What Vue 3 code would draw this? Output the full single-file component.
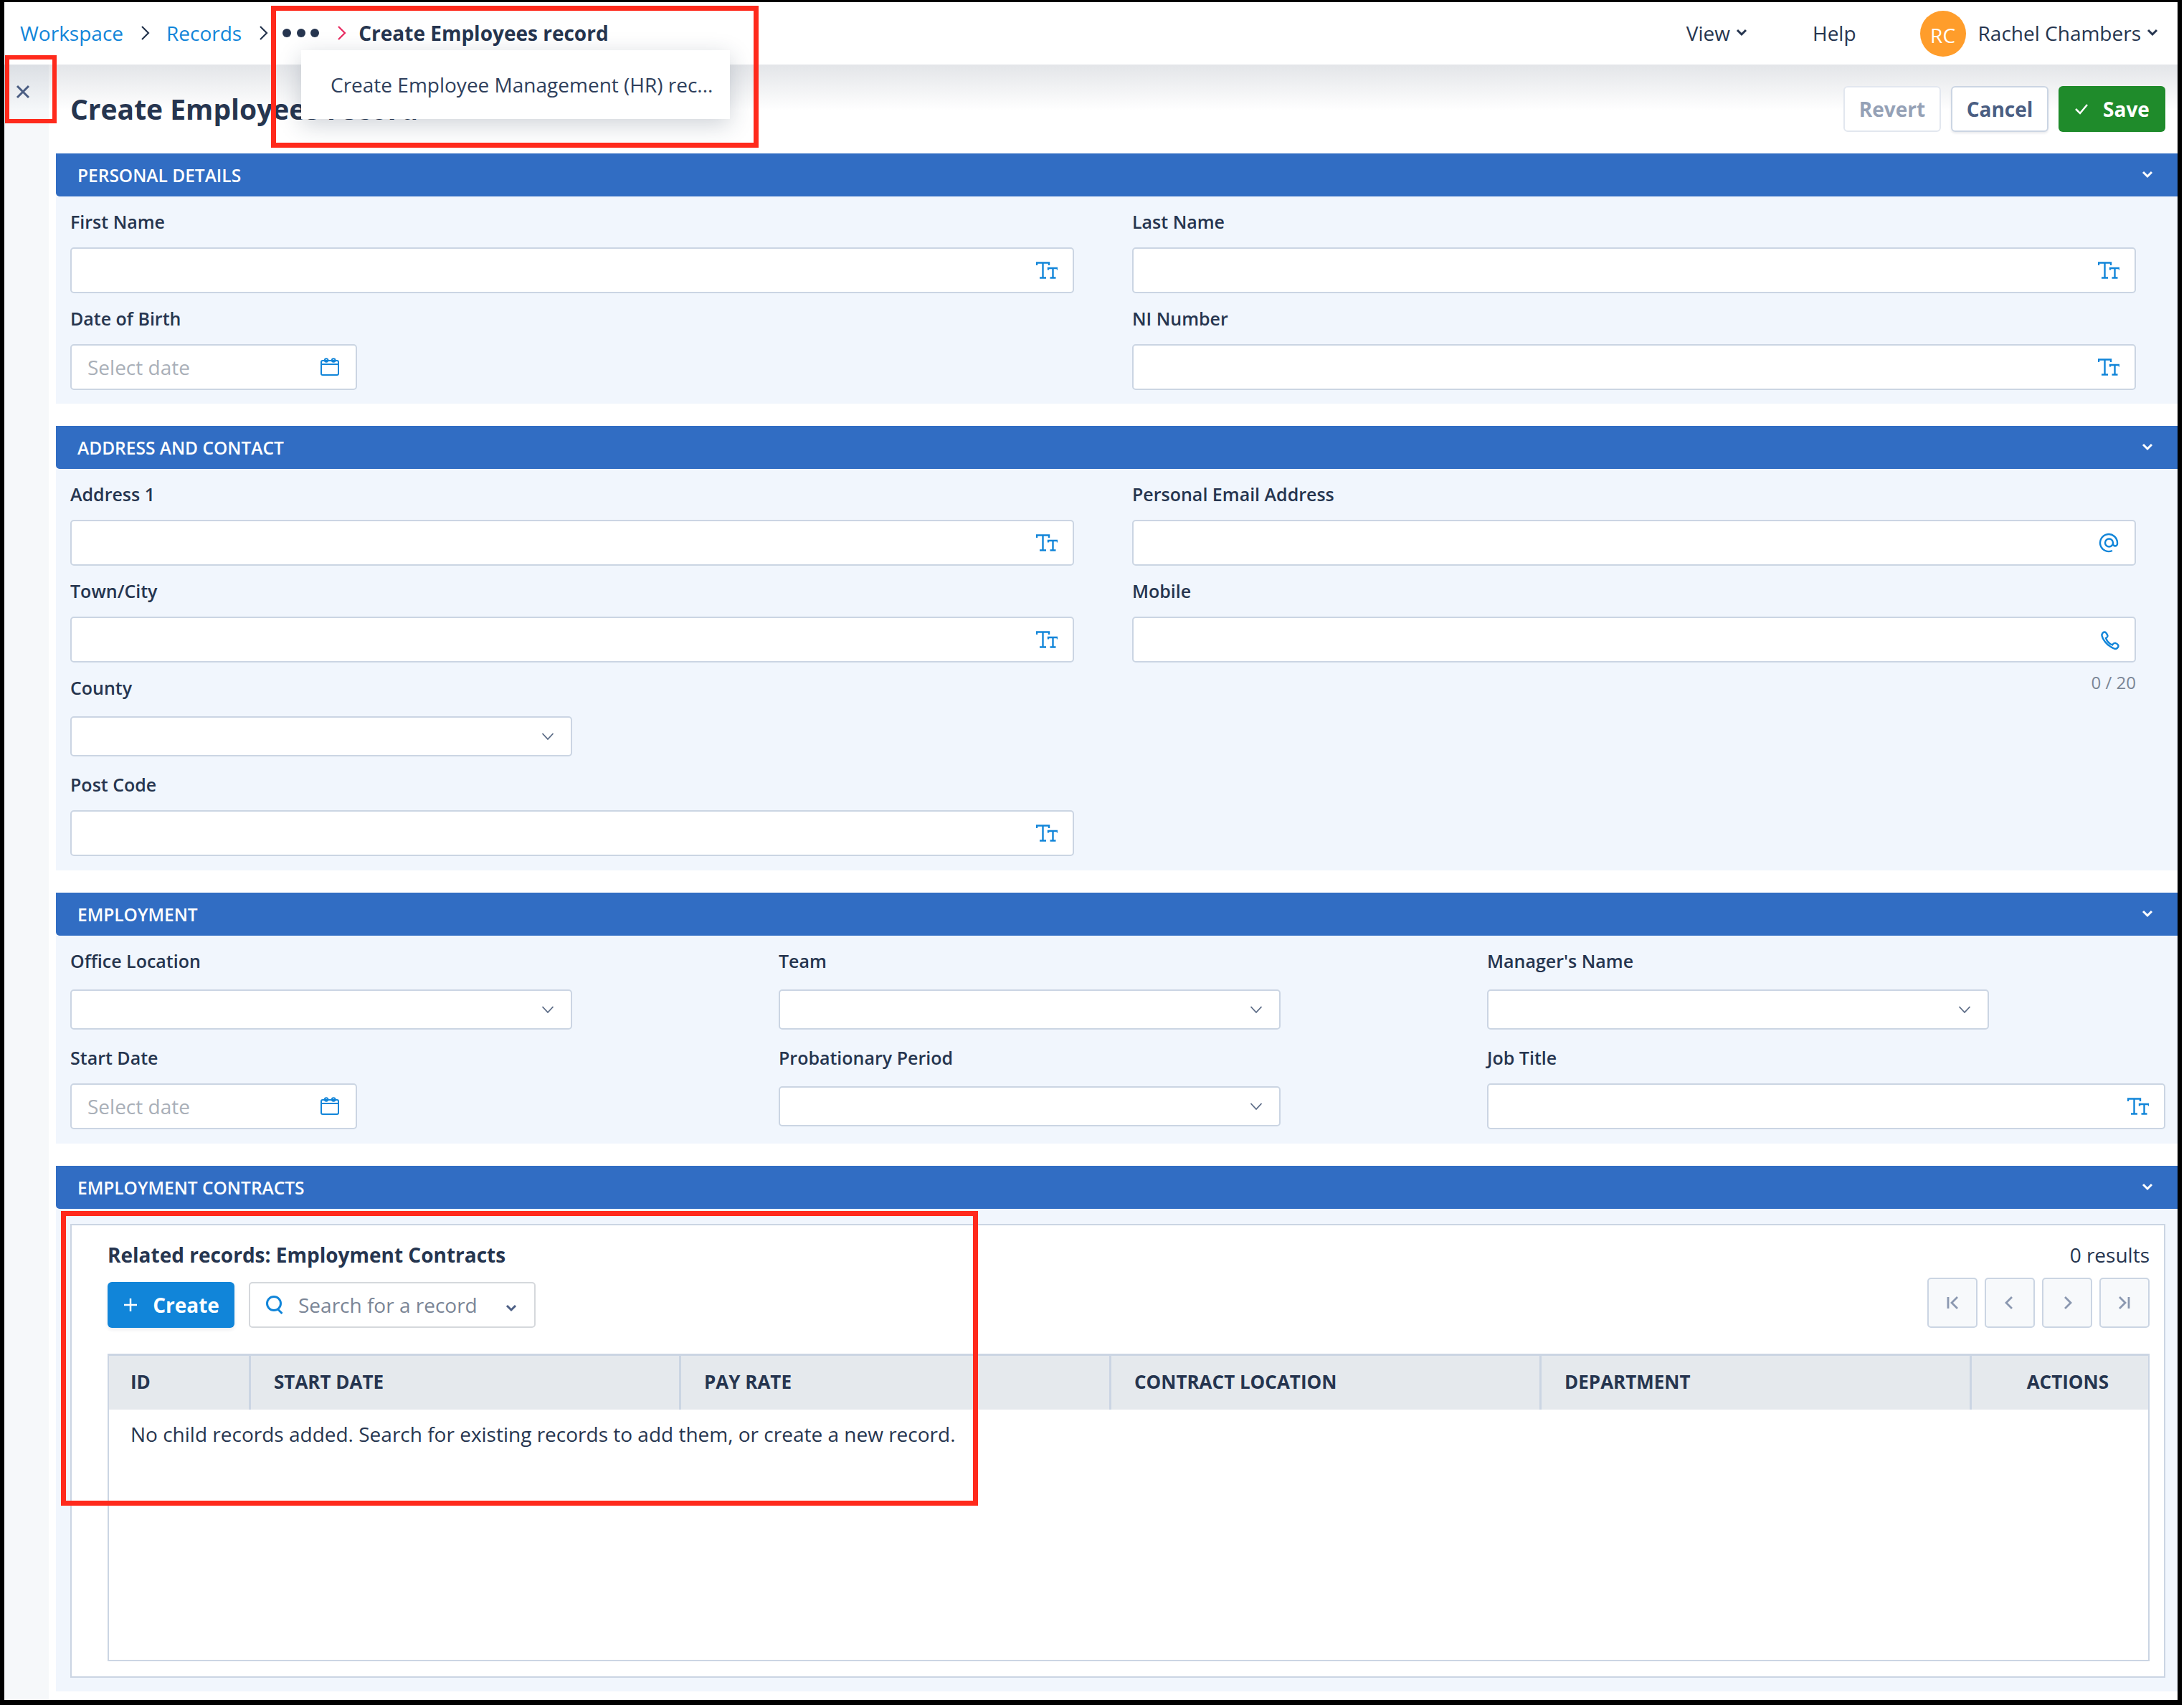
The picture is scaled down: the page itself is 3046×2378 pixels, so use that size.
<script setup>
const icons = {
  tt: 'M1 8V4.5h17V8M9.5 4.5V25M5 25.5h9M17 14.5V12h13v2.5M23.5 12v13.5M19.5 25.5h8',
  at: 'M21 15a5.5 5.5 0 1 1-11 0 5.5 5.5 0 0 1 11 0zM21 15v1.5a3 3 0 0 0 6 0V15A12 12 0 1 0 20 26',
  phone: 'M5.5 9.5C5 7.5 7 4.5 9 4.5c1.5 0 3.5 2.5 4.5 5 .4 1.2-1.500 3-2.5 3.5C12.5 17 16 21 20 22.5c1-1.5 3-3 4.5-2.5 2 .8 4 2.5 4 4 0 2-2.5 4-4.5 4-2-.3-4.5-1.8-7-3.5C12 21.5 6.5 15 5.5 9.5z',
  calendar: 'M5 6h20a2 2 0 0 1 2 2v16a2 2 0 0 1-2 2H5a2 2 0 0 1-2-2V8a2 2 0 0 1 2-2zM3 11h24M12.5 5.5a2.3 2.3 0 1 1-4.6 0 2.3 2.3 0 0 1 4.6 0zM22.5 5.5a2.3 2.3 0 1 1-4.6 0 2.3 2.3 0 0 1 4.6 0z'
};

const sections = [
  {
    title: 'Personal Details',
    cols: 'two',
    fields: [
      { label: 'First Name', type: 'text', icon: 'tt' },
      { label: 'Last Name', type: 'text', icon: 'tt' },
      { label: 'Date of Birth', type: 'date' },
      { label: 'NI Number', type: 'text', icon: 'tt' }
    ]
  },
  {
    title: 'Address and Contact',
    cols: 'two',
    fields: [
      { label: 'Address 1', type: 'text', icon: 'tt' },
      { label: 'Personal Email Address', type: 'text', icon: 'at' },
      { label: 'Town/City', type: 'text', icon: 'tt' },
      { label: 'Mobile', type: 'text', icon: 'phone', hint: '0 / 20' },
      { label: 'County', type: 'select', full: true },
      { label: 'Post Code', type: 'text', icon: 'tt', full: true }
    ]
  },
  {
    title: 'Employment',
    cols: 'three',
    fields: [
      { label: 'Office Location', type: 'select' },
      { label: 'Team', type: 'select' },
      { label: "Manager's Name", type: 'select' },
      { label: 'Start Date', type: 'date' },
      { label: 'Probationary Period', type: 'select' },
      { label: 'Job Title', type: 'text', icon: 'tt' }
    ]
  }
];

const columns = ['ID', 'Start Date', 'Pay Rate', 'Contract Location', 'Department', 'Actions'];
const pager = ['M6 4v16M19 4l-8 8 8 8', 'M15 4l-8 8 8 8', 'M9 4l8 8-8 8', 'M5 4l8 8-8 8M18 4v16'];
</script>

<template>
  <div class="shot">
    <div class="frame">
      <header class="topbar">
        <nav class="crumbs">
          <a class="crumb-link">Workspace</a>
          <svg class="crumb-sep" viewBox="0 0 14 24"><path d="M2 3l9 9-9 9" /></svg>
          <a class="crumb-link">Records</a>
          <svg class="crumb-sep crumb-sep--last" viewBox="0 0 14 24"><path d="M2 3l9 9-9 9" /></svg>
          <span class="dots"><i></i><i></i><i></i></span>
          <svg class="crumb-sep crumb-sep--pink" viewBox="0 0 14 24"><path d="M2 3l9 9-9 9" /></svg>
          <strong class="crumb-current">Create Employees record</strong>
        </nav>
        <div class="top-actions">
          <span class="top-item">View
            <svg class="chev-bold" viewBox="0 0 16 14"><path d="M2 3l6 6 6-6" /></svg>
          </span>
          <span class="top-item top-help">Help</span>
          <span class="avatar">RC</span>
          <span class="top-item top-user">Rachel Chambers
            <svg class="chev-bold" viewBox="0 0 16 14"><path d="M2 3l6 6 6-6" /></svg>
          </span>
        </div>
      </header>

      <div class="crumb-menu">Create Employee Management (HR) rec...</div>

      <div class="page">
        <aside class="side">
          <svg class="close" viewBox="0 0 20 20"><path d="M2 2l16 16M18 2L2 18" /></svg>
        </aside>

        <main class="main">
          <div class="title-row">
            <h1 class="title">Create Employees record</h1>
            <div class="buttons">
              <button class="btn btn-revert">Revert</button>
              <button class="btn btn-cancel">Cancel</button>
              <button class="btn btn-save">
                <svg viewBox="0 0 20 16"><path d="M2 8l6 6L18 2" /></svg>
                Save
              </button>
            </div>
          </div>

          <div class="sections">
            <section v-for="sec in sections" :key="sec.title" class="section">
              <div class="section-head">
                <span>{{ sec.title }}</span>
                <svg class="chev-bold chev-white" viewBox="0 0 16 14"><path d="M2 3l6 6 6-6" /></svg>
              </div>
              <div class="section-body" :class="sec.cols">
                <div
                  v-for="f in sec.fields"
                  :key="f.label"
                  class="field"
                  :class="{ 'field-full': f.full }"
                >
                  <div class="label">{{ f.label }}</div>
                  <div class="control">
                    <div v-if="f.type === 'text'" class="box box-text">
                      <svg class="ficon" viewBox="0 0 30 30"><path :d="icons[f.icon]" /></svg>
                    </div>
                    <div v-else-if="f.type === 'date'" class="box box-date">
                      <span class="placeholder">Select date</span>
                      <svg class="ficon ficon-thin" viewBox="0 0 30 30"><path :d="icons.calendar" /></svg>
                    </div>
                    <div v-else class="box box-select">
                      <svg class="chev-thin" viewBox="0 0 18 12"><path d="M1.5 2L9 10l7.5-8" /></svg>
                    </div>
                    <span v-if="f.hint" class="hint">{{ f.hint }}</span>
                  </div>
                </div>
              </div>
            </section>

            <section class="section">
              <div class="section-head">
                <span>Employment Contracts</span>
                <svg class="chev-bold chev-white" viewBox="0 0 16 14"><path d="M2 3l6 6 6-6" /></svg>
              </div>
              <div class="section-body related">
                <div class="card">
                  <div class="card-head">
                    <h2 class="card-title">Related records: Employment Contracts</h2>
                    <span class="results">0 results</span>
                  </div>
                  <div class="toolbar">
                    <div class="toolbar-left">
                      <button class="btn-create">
                        <svg viewBox="0 0 20 20"><path d="M10 1v18M1 10h18" /></svg>
                        Create
                      </button>
                      <div class="search">
                        <svg class="search-icon" viewBox="0 0 26 28"><path d="M12 2.5a9.5 9.5 0 1 0 0 19 9.5 9.5 0 0 0 0-19zM17.5 20l6 6" /></svg>
                        <span class="search-text">Search for a record</span>
                        <svg class="search-chev" viewBox="0 0 16 14"><path d="M2 3l6 6 6-6" /></svg>
                      </div>
                    </div>
                    <div class="pager">
                      <span v-for="d in pager" :key="d" class="page-btn">
                        <svg viewBox="0 0 24 24"><path :d="d" /></svg>
                      </span>
                    </div>
                  </div>
                  <div class="table">
                    <div class="table-head">
                      <div v-for="c in columns" :key="c" class="th">{{ c }}</div>
                    </div>
                    <div class="table-empty">No child records added. Search for existing records to add them, or create a new record.</div>
                  </div>
                </div>
              </div>
            </section>
          </div>
        </main>
      </div>

      <!-- annotation boxes from the original screenshot -->
      <div class="mark mark-menu"></div>
      <div class="mark mark-close"></div>
      <div class="mark mark-related"></div>
    </div>
  </div>
</template>

<style>
html,
body {
  margin: 0;
  background: #fff;
}
</style>

<style scoped>
* {
  box-sizing: border-box;
}

.shot {
  width: 3046px;
  height: 2378px;
  padding-right: 3px;
  background: #fff;
  font-family: "Open Sans", "Liberation Sans", sans-serif;
  font-size: 28px;
  color: #26354f;
  overflow: hidden;
}

.frame {
  position: relative;
  height: 100%;
  display: flex;
  flex-direction: column;
  border-style: solid;
  border-color: #000;
  border-width: 3px 6px 7px 6px;
  background: #fff;
}

/* top bar */
.topbar {
  position: relative;
  z-index: 2;
  height: 87px;
  flex: none;
  display: flex;
  align-items: center;
  justify-content: space-between;
  padding: 0 27px 2px 22px;
  background: #fff;
}

.crumbs {
  display: flex;
  align-items: center;
}

.crumb-link {
  color: #1185d9;
}

.crumb-sep {
  width: 14px;
  height: 24px;
  margin: 0 22px 0 24px;
  fill: none;
  stroke: #26354f;
  stroke-width: 2.2;
}

.crumb-sep--last {
  margin-right: 19px;
}

.crumb-sep--pink {
  stroke: #e8285f;
  margin: 0 16px 0 25px;
}

.dots {
  display: flex;
  gap: 7.5px;
}

.dots i {
  width: 12px;
  height: 12px;
  border-radius: 50%;
  background: #26354f;
}

.crumb-current {
  font-weight: 700;
}

.top-actions {
  display: flex;
  align-items: center;
}

.top-item {
  display: flex;
  align-items: center;
  gap: 8px;
}

.top-help {
  margin: 0 89px 0 91px;
}

.avatar {
  width: 64px;
  height: 64px;
  margin: 2px 17px 0 0;
  border-radius: 50%;
  display: flex;
  align-items: center;
  justify-content: center;
  background: #ff9d2b;
  color: #fff;
  padding-top: 4px;
}

.chev-bold {
  width: 16px;
  height: 14px;
  fill: none;
  stroke: #26354f;
  stroke-width: 3;
}

.chev-white {
  stroke: #fff;
}

.crumb-menu {
  position: absolute;
  z-index: 3;
  left: 414px;
  top: 67px;
  width: 598px;
  height: 96px;
  padding: 0 24px 0 41px;
  display: flex;
  align-items: center;
  white-space: nowrap;
  background: #fff;
  color: #2f3f5c;
  box-shadow: 0 8px 30px rgba(38, 53, 79, 0.22);
}

/* page */
.page {
  position: relative;
  flex: 1;
  display: flex;
}

.page::before {
  content: "";
  position: absolute;
  left: 0;
  right: 0;
  top: 0;
  height: 64px;
  background: linear-gradient(rgba(38, 53, 79, 0.13), rgba(38, 53, 79, 0));
  z-index: 1;
}

.side {
  width: 62px;
  flex: none;
  background: #f6f8fa;
  padding: 28px 0 0 16px;
}

.close {
  width: 20px;
  height: 20px;
  display: block;
  fill: none;
  stroke: #4c5f85;
  stroke-width: 3;
}

.main {
  flex: 1;
  min-width: 0;
  padding-left: 10px;
}

.title-row {
  display: flex;
  align-items: center;
  justify-content: space-between;
  padding: 30px 17px 30px 20px;
  height: 124px;
}

.title {
  position: relative;
  z-index: 2;
  margin: 0;
  font-size: 39px;
  font-weight: 700;
  line-height: 64px;
  white-space: nowrap;
}

.buttons {
  position: relative;
  z-index: 2;
  display: flex;
  gap: 14px;
}

.btn {
  height: 64px;
  width: 136px;
  padding: 0;
  border: 2px solid #cbd5e3;
  border-radius: 6px;
  background: #fff;
  font: 700 28px "Open Sans", sans-serif;
}

.btn-revert {
  border-color: #e2e7ef;
  color: #95a1b6;
}

.btn-cancel {
  color: #4b5e82;
  box-shadow: 0 2px 3px rgba(38, 53, 79, 0.1);
}

.btn-save {
  width: 149px;
  border: 0;
  background: #1f8b2b;
  color: #fff;
  display: flex;
  align-items: center;
  justify-content: center;
  gap: 20px;
}

.btn-save svg {
  width: 20px;
  height: 16px;
  fill: none;
  stroke: #fff;
  stroke-width: 2.5;
}

/* sections */
.sections {
  display: flex;
  flex-direction: column;
  gap: 31px;
}

.section-head {
  height: 60px;
  display: flex;
  align-items: center;
  justify-content: space-between;
  padding: 0 34px 0 30px;
  background: #316dc3;
  border-radius: 0 0 0 5px;
  color: #fff;
  font-size: 24.5px;
  font-weight: 600;
  text-transform: uppercase;
}

.section-body {
  display: grid;
  row-gap: 20px;
  padding: 20px 17px 20px 20px;
  background: #f1f6fd;
}

.section:nth-of-type(1) .section-body {
  padding-bottom: 19px;
}

.two {
  grid-template-columns: 1400px 1400px;
  column-gap: 81px;
}

.three {
  grid-template-columns: repeat(3, 946px);
  column-gap: 42px;
}

.field-full {
  grid-column: 1;
}

.label {
  height: 34px;
  margin-bottom: 17px;
  line-height: 30px;
  font-size: 25px;
  font-weight: 600;
}

.control {
  position: relative;
  height: 64px;
  display: flex;
  align-items: center;
}

.box {
  height: 64px;
  display: flex;
  align-items: center;
  justify-content: flex-end;
  background: #fff;
  border: 2px solid #cbd5e3;
  border-radius: 5px;
  padding-right: 21px;
}

.box-text {
  width: 100%;
}

.box-date {
  width: 400px;
  justify-content: space-between;
  padding-left: 22px;
}

.box-select {
  width: 700px;
  height: 56px;
  padding-right: 23px;
}

.placeholder {
  color: #a9afb8;
}

.ficon {
  width: 30px;
  height: 30px;
  fill: none;
  stroke: #1185d9;
  stroke-width: 2.4;
}

.ficon-thin {
  stroke-width: 2;
}

.chev-thin {
  width: 18px;
  height: 12px;
  fill: none;
  stroke: #5a6a85;
  stroke-width: 1.8;
}

.hint {
  position: absolute;
  right: 0;
  top: 100%;
  margin-top: 11px;
  line-height: 34px;
  font-size: 24px;
  color: #7b8696;
}

/* related records */
.related {
  display: block;
  height: 673px;
  padding: 21px 17px 19px 20px;
}

.card {
  height: 100%;
  display: flex;
  flex-direction: column;
  padding: 21px 20px 21px 50px;
  background: #fff;
  border: 2px solid #cbd5e3;
}

.card-head {
  display: flex;
  align-items: center;
  justify-content: space-between;
  height: 40px;
}

.card-title {
  margin: 0;
  font-size: 28px;
  font-weight: 700;
}

.toolbar {
  display: flex;
  align-items: flex-end;
  justify-content: space-between;
  margin: 12px 0 36px;
}

.toolbar-left {
  display: flex;
  gap: 20px;
}

.btn-create {
  width: 177px;
  height: 64px;
  padding: 0 0 0 1px;
  display: flex;
  align-items: center;
  justify-content: center;
  gap: 21px;
  border: 0;
  border-radius: 6px;
  background: #1185d9;
  color: #fff;
  font: 700 28px "Open Sans", sans-serif;
  box-shadow: 0 3px 4px rgba(38, 53, 79, 0.08);
}

.btn-create svg {
  width: 20px;
  height: 20px;
  fill: none;
  stroke: #fff;
  stroke-width: 2.5;
}

.search {
  width: 400px;
  height: 64px;
  display: flex;
  align-items: center;
  padding: 0 24px 0 21px;
  border: 2px solid #d5d8dc;
  border-radius: 5px;
}

.search-icon {
  width: 26px;
  height: 28px;
  fill: none;
  stroke: #1185d9;
  stroke-width: 3;
}

.search-text {
  flex: 1;
  margin-left: 20px;
  color: #7a8596;
}

.search-chev {
  width: 16px;
  height: 14px;
  margin-top: 10px;
  fill: none;
  stroke: #4c5f85;
  stroke-width: 3;
}

.pager {
  display: flex;
  gap: 10px;
}

.page-btn {
  width: 70px;
  height: 70px;
  display: flex;
  align-items: center;
  justify-content: center;
  background: #f7f9fb;
  border: 2px solid #cbd5e3;
  border-radius: 5px;
}

.page-btn svg {
  width: 24px;
  height: 24px;
  fill: none;
  stroke: #8b98b0;
  stroke-width: 2.8;
}

.table {
  flex: 1;
  border: 2px solid #cbd5e3;
  border-top: 0;
}

.table-head {
  display: grid;
  grid-template-columns: 195px 600px 600px 600px 600px 1fr;
  height: 78px;
  background: #e5e9ed;
  border-top: 3px solid #cbd5e3;
}

.th {
  display: flex;
  align-items: center;
  padding: 0 0 3px 32px;
  border-left: 3px solid #cbd5e3;
  font-size: 26px;
  font-weight: 700;
  text-transform: uppercase;
}

.th:first-child {
  padding-left: 30px;
  border-left: 0;
}

.th:last-child {
  justify-content: flex-end;
  padding-right: 55px;
}

.table-empty {
  padding: 15px 0 0 30px;
  line-height: 38px;
}

/* red annotation boxes */
.mark {
  position: absolute;
  z-index: 4;
  border: 7px solid #ff2a1c;
}

.mark-menu {
  left: 372px;
  top: 5px;
  width: 680px;
  height: 198px;
}

.mark-close {
  left: 1px;
  top: 74px;
  width: 72px;
  height: 95px;
  border-width: 6px;
}

.mark-related {
  left: 79px;
  top: 1686px;
  width: 1279px;
  height: 411px;
}
</style>
